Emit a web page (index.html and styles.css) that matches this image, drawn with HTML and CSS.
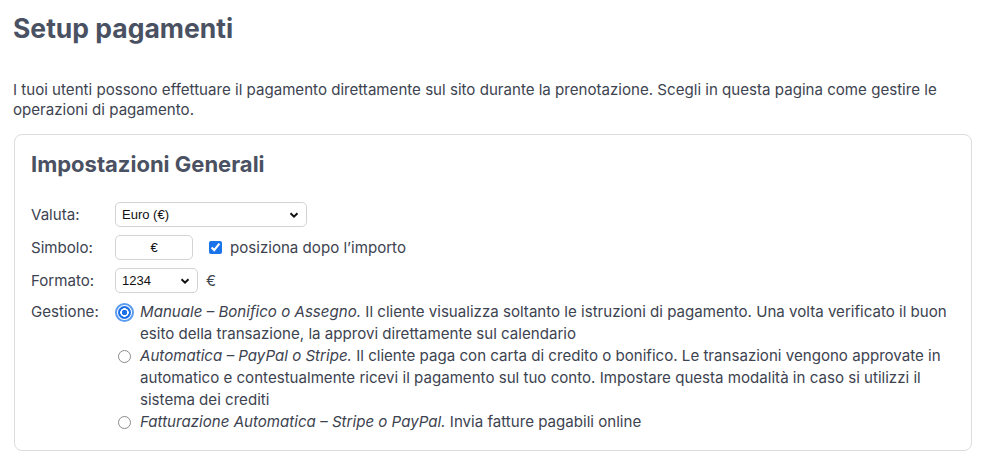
FILE: index.html
```html
<!DOCTYPE html>
<html lang="it">
<head>
    <meta charset="UTF-8">
    <meta name="viewport" content="width=device-width, initial-scale=1.0">
    <title>Setup pagamenti</title>
    <link rel="stylesheet" href="styles.css">
</head>
<body>
    <h1>Setup pagamenti</h1>
    <p class="intro">I tuoi utenti possono effettuare il pagamento direttamente sul sito durante la prenotazione. Scegli in questa pagina come gestire le operazioni di pagamento.</p>

    <div class="card">
        <h2>Impostazioni Generali</h2>

        <div class="riga">
            <label class="etichetta" for="valuta">Valuta:</label>
            <select id="valuta" class="sel-valuta">
                <option>Euro (€)</option>
            </select>
        </div>

        <div class="riga">
            <label class="etichetta" for="simbolo">Simbolo:</label>
            <input type="text" id="simbolo" class="inp-simbolo" value="€">
            <label class="check">
                <input type="checkbox" checked>
                posiziona dopo l’importo
            </label>
        </div>

        <div class="riga">
            <label class="etichetta" for="formato">Formato:</label>
            <select id="formato" class="sel-formato">
                <option>1234</option>
            </select>
            <span class="valuta-dopo">€</span>
        </div>

        <div class="riga riga-gestione">
            <span class="etichetta">Gestione:</span>
            <div class="opzioni">
                <label class="opzione">
                    <input type="radio" name="gestione" checked>
                    <span><em>Manuale – Bonifico o Assegno.</em> Il cliente visualizza soltanto le istruzioni di pagamento. Una volta verificato il buon esito della transazione, la approvi direttamente sul calendario</span>
                </label>
                <label class="opzione">
                    <input type="radio" name="gestione">
                    <span><em>Automatica – PayPal o Stripe.</em> Il cliente paga con carta di credito o bonifico. Le transazioni vengono approvate in automatico e contestualmente ricevi il pagamento sul tuo conto. Impostare questa modalità in caso si utilizzi il sistema dei crediti</span>
                </label>
                <label class="opzione">
                    <input type="radio" name="gestione">
                    <span><em>Fatturazione Automatica – Stripe o PayPal.</em> Invia fatture pagabili online</span>
                </label>
            </div>
        </div>
    </div>
</body>
</html>
```

FILE: styles.css
```css
body {
    font-family: Inter, "Noto Sans", sans-serif;
    margin: 0;
    padding: 0 13px;
    background-color: #fff;
    color: #3d4350;
    font-size: 15.1px;
}

h1 {
    margin: 10px 0 0;
    font-size: 26.5px;
    font-weight: 700;
    color: #4a5162;
    line-height: 36px;
}

.intro {
    margin: 34px 0 14px;
    line-height: 20px;
}

.card {
    margin-left: 1px;
    width: 958px;
    border: 1px solid #dcdcdc;
    border-radius: 8px;
    padding: 12px 16px 17px;
    box-sizing: border-box;
}

h2 {
    margin: 0 0 21px;
    font-size: 22px;
    font-weight: 700;
    color: #4a5162;
    line-height: 34px;
}

.riga {
    display: flex;
    align-items: center;
    margin-bottom: 8px;
}

.riga-formato {
    margin-bottom: 9px;
}

.etichetta {
    width: 84px;
    flex-shrink: 0;
}

select,
input[type="text"] {
    font-family: "Liberation Sans", Arial, sans-serif;
    font-size: 13px;
    color: #111;
    background: #fff;
    border: 1px solid #d3d3d3;
    border-radius: 5px;
    height: 25px;
    box-sizing: border-box;
    padding: 0 6px;
}

select {
    appearance: none;
    background-image: url("data:image/svg+xml,%3Csvg xmlns='http://www.w3.org/2000/svg' width='10' height='8' viewBox='0 0 10 8'%3E%3Cpath d='M1.5 2.2 5 5.7 8.5 2.2' fill='none' stroke='%23111' stroke-width='2'/%3E%3C/svg%3E");
    background-repeat: no-repeat;
    background-position: right 7px center;
}

.sel-valuta {
    width: 192px;
}

.sel-formato {
    width: 83px;
}

.inp-simbolo {
    width: 78px;
    text-align: center;
}

.check {
    display: flex;
    align-items: center;
    margin-left: 16px;
}

.check input {
    margin: 0 8px 0 0;
    width: 13px;
    height: 13px;
    accent-color: #1a73e8;
}

.valuta-dopo {
    margin-left: 8px;
}

.riga-gestione {
    align-items: flex-start;
    margin-bottom: 0;
}

.riga-gestione .etichetta {
    line-height: 22px;
}

.opzioni {
    display: flex;
    flex-direction: column;
}

.opzione {
    display: flex;
    align-items: flex-start;
    line-height: 22px;
}

.opzione input {
    appearance: none;
    margin: 5px 9px 0 3px;
    width: 13px;
    height: 13px;
    flex-shrink: 0;
    border: 1px solid #8a8a8a;
    border-radius: 50%;
    background: #fff;
    box-sizing: border-box;
}

.opzione input:checked {
    border: none;
    background: radial-gradient(circle, #1a6fe8 0 2.5px, #fff 3px 4px, #1a6fe8 4.5px);
    outline: 2.5px solid #5b9bf0;
    outline-offset: 1px;
}
```
